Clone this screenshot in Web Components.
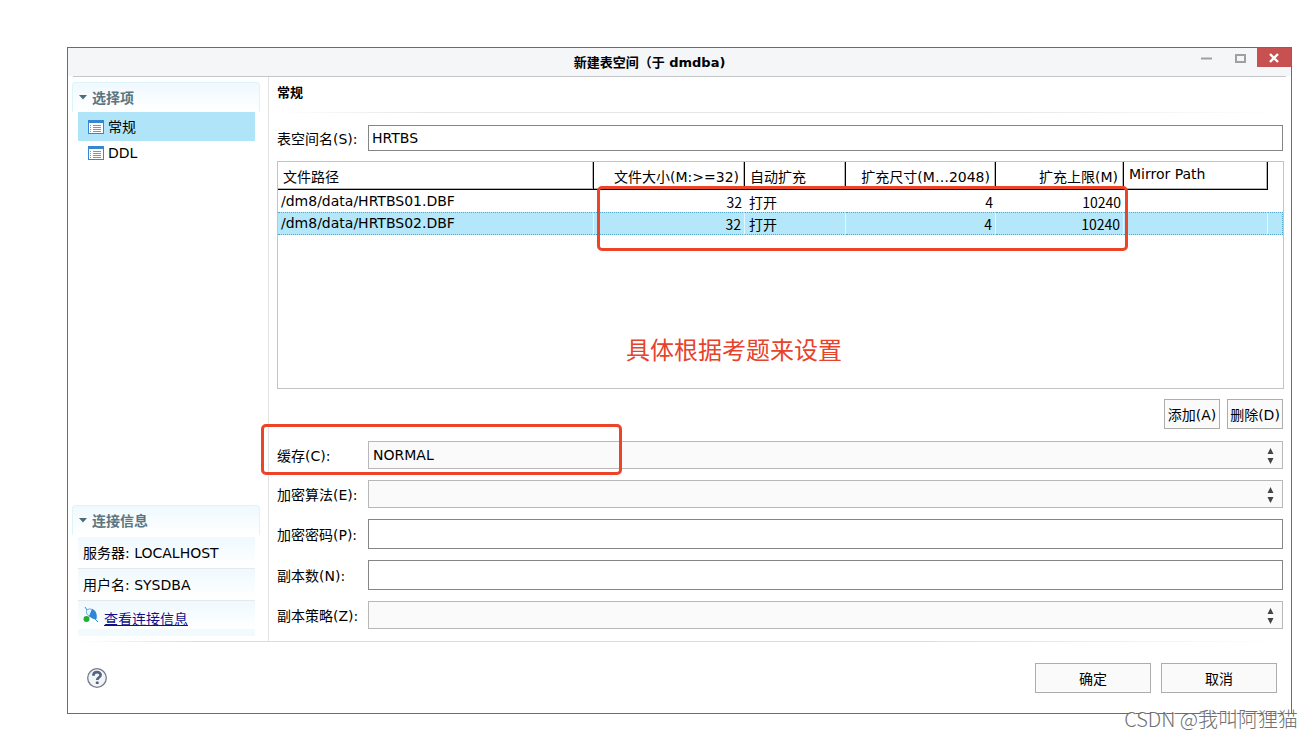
<!DOCTYPE html>
<html lang="zh-CN">
<head>
<meta charset="utf-8">
<title>新建表空间</title>
<style>
  body { margin: 0; background: #fff; color: #000; font: 14px/20px "DejaVu Sans", "Noto Sans CJK SC", sans-serif; }
</style>
</head>
<body>
<dm-desktop>
  <dm-dialog caption="新建表空间（于 dmdba)">
    <dm-section slot="side" caption="选择项">
      <dm-nav-item selected>常规</dm-nav-item>
      <dm-nav-item>DDL</dm-nav-item>
    </dm-section>
    <dm-section slot="side" caption="连接信息">
      <dm-info-row>服务器: LOCALHOST</dm-info-row>
      <dm-info-row>用户名: SYSDBA</dm-info-row>
      <dm-info-row link>查看连接信息</dm-info-row>
    </dm-section>
    <dm-tablespace-form></dm-tablespace-form>
    <dm-button slot="actions" wide>确定</dm-button>
    <dm-button slot="actions" wide>取消</dm-button>
  </dm-dialog>
  <dm-watermark slot="mark">CSDN @我叫阿狸猫</dm-watermark>
</dm-desktop>

<script>
const define = (name, render) => customElements.define(name, class extends HTMLElement {
  connectedCallback() {
    if (this.shadowRoot) return;
    this.attachShadow({ mode: 'open' }).innerHTML = render(this);
  }
});

define('dm-desktop', () => `
  <style>
    :host { display: block; position: relative; padding: 47px 21px 24px 67px; }
  </style>
  <slot></slot><slot name="mark"></slot>`);

define('dm-watermark', () => `
  <style>
    :host { position: absolute; right: 15px; bottom: 4px; font: 300 20px/30px "Noto Sans CJK SC", sans-serif;
      color: #707070; text-shadow: 1px 1px 0 #fff; white-space: nowrap; }
  </style>
  <slot></slot>`);

define('dm-dialog', el => `
  <style>
    :host { display: block; border: 1px solid #2f829f; background: #fff; }
    header { display: flex; align-items: flex-start; height: 28px; background: #f4f6f8; }
    h1 { flex: 1; margin: 0; padding-left: 42px; text-align: center; font-size: 13px; line-height: 30px; }
    .win { display: flex; }
    .win button { width: 34px; height: 19px; border: 0; padding: 0; background: none; display: grid; place-items: center; }
    .win .close { background: #c75050; }
    .rule { height: 1px; margin: 0 5px; background: #c4c6c9; }
    .body { display: flex; }
    aside { flex: none; width: 200px; box-sizing: border-box; padding: 5px 8px 5px 4px; display: flex; flex-direction: column;
      justify-content: space-between; }
    main { flex: 1; min-width: 0; padding: 0 7px 12px 8px; border-left: 1px solid #e3e3e3; }
    .line { height: 1px; margin: 0 10px; background: linear-gradient(90deg, #fff, #ddd 10%, #ddd 70%, #fff); }
    footer { display: flex; align-items: center; justify-content: space-between; padding: 21px 14px 20px 18px; }
    .help { width: 22px; height: 22px; border: 0; padding: 0; background: none; }
    .actions { display: flex; gap: 10px; }
    svg { display: block; }
  </style>
  <header>
    <h1>${el.getAttribute('caption')}</h1>
    <div class="win">
      <button type="button" aria-label="最小化"><svg width="12" height="10"><path d="M1 5.500h11" stroke="#a0a0a0" stroke-width="2"/></svg></button>
      <button type="button" aria-label="最大化"><svg width="12" height="10"><path d="M2 2h9v7H2z" fill="none" stroke="#a0a0a0" stroke-width="2"/></svg></button>
      <button type="button" class="close" aria-label="关闭"><svg width="10" height="10"><path d="M1 1l8 8M9 1L1 9" stroke="#fff" stroke-width="2.400"/></svg></button>
    </div>
  </header>
  <div class="rule"></div>
  <div class="body">
    <aside><slot name="side"></slot></aside>
    <main><slot></slot></main>
  </div>
  <div class="line"></div>
  <footer>
    <button type="button" class="help" aria-label="帮助">
      <svg width="22" height="22" viewBox="0 0 22 22"><circle cx="11" cy="11" r="9.300" fill="#f3f4f6" stroke="#737b8b" stroke-width="1.300"/>
      <path d="M7.400 8.700c0-4.700 7.200-4.500 7.200-.7 0 2.500-3.400 2.500-3.400 5" fill="none" stroke="#566383" stroke-width="2.700"/><rect x="9.800" y="14.400" width="2.900" height="2.700" rx=".6" fill="#566383"/></svg>
    </button>
    <div class="actions"><slot name="actions"></slot></div>
  </footer>`);

define('dm-section', el => `
  <style>
    :host { display: block; }
    h2 { display: flex; align-items: center; gap: 5px; height: 29px; margin: 0; padding-left: 6px; border: 1px solid #ddf4fc; border-bottom: 0;
      border-radius: 4px 4px 0 0; background: linear-gradient(#eff9fe, #fff); color: #5b7480; font-size: 14px; line-height: 20px; font-weight: 700; }
    .items { padding: 0 5px 0 6px; }
    ::slotted(dm-info-row:first-child) { margin-top: 2px; }
  </style>
  <h2><svg width="8" height="5"><path d="M0 0h8L4 4.500z" fill="#4f6a78"/></svg>${el.getAttribute('caption')}</h2>
  <div class="items"><slot></slot></div>`);

define('dm-nav-item', () => `
  <style>
    :host { display: flex; align-items: center; gap: 4px; box-sizing: border-box; height: 24px; padding-left: 10px; }
    :host([selected]) { height: 29px; background: #b0e5f9; }
  </style>
  <svg width="16" height="14"><rect x=".5" y=".5" width="15" height="13" fill="#fff" stroke="#3587d2"/><path d="M0 0h16v3H0z" fill="#3587d2"/>
  <path d="M2 5.500h1M2 7.500h1M2 9.500h1M2 11.500h1M5 5.500h8M5 7.500h8M5 9.500h8M5 11.500h8" stroke="#8793ac"/></svg>
  <slot></slot>`);

define('dm-info-row', el => `
  <style>
    :host { display: flex; align-items: center; gap: 5px; height: 31px; padding: 0 5px; background: linear-gradient(#eff9fe, #fff);
      border-bottom: 1px solid #e4e9ec; }
    :host([link]) { height: 28px; border-bottom: 7px solid #f1fafe; }
    a { color: #10108a; padding-top: 8px; }
  </style>
  ${el.hasAttribute('link')
    ? `<svg width="16" height="18" viewBox="0 0 16 18"><path d="M2 1l2 3M12 13l3 3" stroke="#2f86d2"/><path d="M3.500 4.500C3 8 5 10.500 8 10.500L10 4C8 2.500 5 2.500 3.500 4.500z" fill="#eaf5fd" stroke="#69a8de"/>
      <path d="M9 3c4 1 5.500 6 4.500 10C11 13.500 8 12.500 6 10z" fill="#2f86d2"/><circle cx="3.500" cy="13" r="3" fill="#20ad38"/></svg><a href="#"><slot></slot></a>`
    : '<slot></slot>'}`);

define('dm-button', () => `
  <style>
    :host { display: block; }
    button { box-sizing: border-box; height: 30px; min-width: 56px; padding: 2px 2px 0; border: 1px solid #adadad; background: #fafafa; color: #000;
      font: inherit; line-height: 26px; white-space: nowrap; }
    :host([wide]) button { width: 116px; }
  </style>
  <button type="button"><slot></slot></button>`);

define('dm-field', el => {
  const select = el.getAttribute('kind') === 'select';
  const value = el.getAttribute('value') || '';
  return `
  <style>
    :host { display: flex; align-items: center; position: relative; }
    label { flex: none; width: 91px; padding-top: 2px; white-space: nowrap; }
    .box { flex: 1; position: relative; display: flex; min-width: 0; margin-right: 1px; }
    input, select { flex: 1; min-width: 0; box-sizing: border-box; height: 30px; margin: 0; border: 1px solid #858585; border-radius: 0;
      padding: 0 4px; background: #fff; color: #000; font: inherit; }
    :host([compact]) input { height: 26px; padding: 0 3px; }
    select { appearance: none; height: 28px; border-color: #b8b8b8; background: #fafafa; }
    svg { position: absolute; right: 9px; top: 7px; pointer-events: none; }
  </style>
  <label for="control">${el.getAttribute('label')}</label>
  <div class="box">${select
    ? `<select id="control"><option>${value}</option></select><svg width="7" height="16"><path d="M3.500 0l3 6h-6zM3.500 16l3-6h-6z" fill="#444"/></svg>`
    : `<input id="control" type="text" value="${value}">`}</div>
  <slot></slot>`;
});

define('dm-highlight', () => `
  <style>
    :host { position: absolute; box-sizing: border-box; border: 3px solid #ec4429; border-radius: 5px; pointer-events: none; }
  </style>`);

define('dm-file-table', () => {
  const row = (path, cls) => `<tr class="${cls}"><td>${path}</td><td class="num">32</td><td class="cjk">打开</td><td class="num">4</td><td class="num">10240</td><td></td><td></td></tr>`;
  return `
  <style>
    :host { display: block; position: relative; box-sizing: border-box; height: 228px; border: 1px solid #c4c4c4; }
    table { width: 100%; table-layout: fixed; border-collapse: separate; border-spacing: 0; }
    th, td { box-sizing: border-box; padding: 1px 3px 0; text-align: left; font-weight: 400; white-space: nowrap; vertical-align: top; line-height: 20px; }
    th { height: 28px; padding: 5px 5px 2px; border-right: 1px solid #000; border-bottom: 1px solid #000; box-shadow: inset -1px -1px #b5b5b5; }
    th.latin { padding-top: 2px; }
    th.filler { border: 0; box-shadow: none; }
    th.right, td.num { text-align: right; }
    td { height: 22px; }
    td.num, td.cjk { padding-top: 2px; font-family: "Noto Sans CJK SC", sans-serif; }
    td.cjk { padding-left: 4px; }
    .selected td { background: #b3e7f9; border-top: 1px dotted #4fa5c8; border-bottom: 1px dotted #4fa5c8; border-right: 1px solid #e2f6fd; line-height: 19px; height: 23px; }
    .selected td:last-child { border-right: 1px dotted #4fa5c8; }
    .note { position: absolute; left: 348px; top: 171px; margin: 0; color: #e6432c; font-size: 24px; line-height: 36px; white-space: nowrap; }
    dm-highlight { right: 155px; top: 24px; width: 531px; height: 65px; }
  </style>
  <table>
    <colgroup><col><col style="width:151px"><col style="width:101px"><col style="width:150px"><col style="width:128px"><col style="width:144px"><col style="width:15px"></colgroup>
    <thead><tr><th>文件路径</th><th class="right">文件大小(M:&gt;=32)</th><th>自动扩充</th><th class="right">扩充尺寸(M…2048)</th><th class="right">扩充上限(M)</th><th class="latin">Mirror Path</th><th class="filler"></th></tr></thead>
    <tbody>${row('/dm8/data/HRTBS01.DBF', '')}${row('/dm8/data/HRTBS02.DBF', 'selected')}</tbody>
  </table>
  <dm-highlight></dm-highlight>
  <p class="note">具体根据考题来设置</p>`;
});

define('dm-tablespace-form', () => `
  <style>
    :host { display: block; }
    h2 { margin: 0; padding: 6px 0 9px; font-size: 13px; line-height: 20px; }
    .line { height: 1px; margin-bottom: 12px; background: linear-gradient(90deg, #fff, #e6e6e6 15%, #e6e6e6 70%, #fff); }
    dm-file-table { margin: 10px 0; }
    .row { display: flex; justify-content: flex-end; gap: 7px; margin: 0 1px 12px; }
    .fields { display: flex; flex-direction: column; gap: 11px; }
    dm-highlight { left: -16px; top: -17px; width: 361px; height: 51px; }
  </style>
  <h2>常规</h2>
  <div class="line"></div>
  <dm-field compact label="表空间名(S):" value="HRTBS"></dm-field>
  <dm-file-table></dm-file-table>
  <div class="row"><dm-button>添加(A)</dm-button><dm-button>删除(D)</dm-button></div>
  <div class="fields">
    <dm-field kind="select" label="缓存(C):" value="NORMAL"><dm-highlight></dm-highlight></dm-field>
    <dm-field kind="select" label="加密算法(E):"></dm-field>
    <dm-field label="加密密码(P):"></dm-field>
    <dm-field label="副本数(N):"></dm-field>
    <dm-field kind="select" label="副本策略(Z):"></dm-field>
  </div>`);
</script>
</body>
</html>
